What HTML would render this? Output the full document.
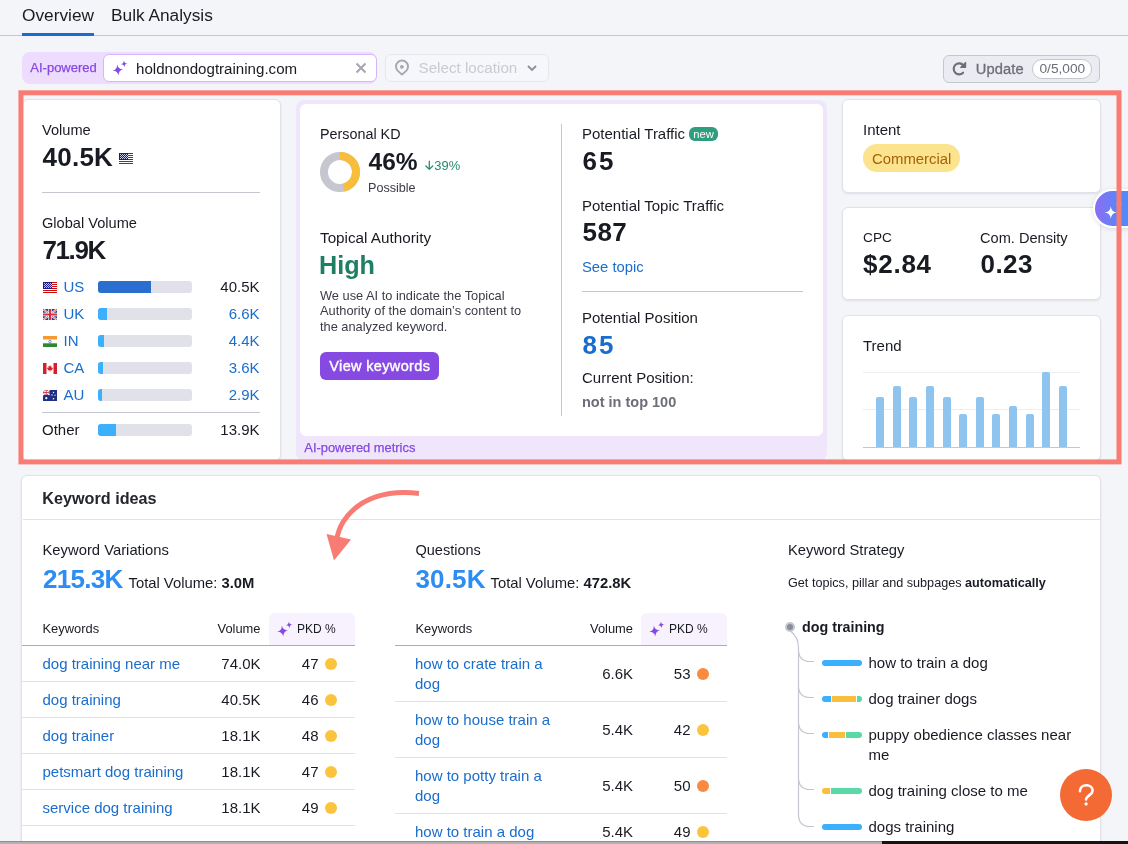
<!DOCTYPE html>
<html><head><meta charset="utf-8">
<style>
*{box-sizing:border-box;margin:0;padding:0}
html,body{width:1128px;height:844px;overflow:hidden;background:#f4f5f9;font-family:"Liberation Sans",sans-serif}
#root{position:absolute;left:0;top:0;width:1128px;height:844px;will-change:transform;font-family:"Liberation Sans",sans-serif;color:#191b23}
.a{position:absolute;white-space:nowrap}
svg.a{overflow:visible}
.card{position:absolute;background:#fff;border:1px solid #e0e1e9;border-radius:6px;box-shadow:0 1px 2px rgba(25,27,35,.10)}
</style></head>
<body><div id="root">
<div class="a" style="left:22px;top:5.01px;font-size:17.3px;line-height:20px;color:#191b23;">Overview</div>
<div class="a" style="left:111px;top:5.01px;font-size:17.3px;line-height:20px;color:#191b23;">Bulk Analysis</div>
<div class="a" style="left:0px;top:35px;width:1128px;height:1px;background:#c4c7cf;"></div>
<div class="a" style="left:22px;top:33px;width:72px;height:3px;background:#1a6dcc;"></div>
<div class="a" style="left:22px;top:52px;width:355px;height:32px;background:#eedcfe;border-radius:8px;"></div>
<div class="a" style="left:30.3px;top:60.00px;font-size:13.0px;line-height:16px;color:#8649e1;-webkit-text-stroke:0.25px #8649e1;">AI-powered</div>
<div class="a" style="left:103px;top:54px;width:274px;height:28px;background:#fff;border:1px solid #d5b6fb;border-radius:6px;"></div>
<svg class="a" style="left:0;top:0" width="1128" height="844"><g fill="#8649e1"><path transform="rotate(-8 117.9 70)" d="M117.90 64.50 Q118.34 69.56 123.40 70.00 Q118.34 70.44 117.90 75.50 Q117.46 70.44 112.40 70.00 Q117.46 69.56 117.90 64.50Z"/><path transform="rotate(-8 124.2 63.8)" d="M124.20 60.40 Q124.47 63.53 127.60 63.80 Q124.47 64.07 124.20 67.20 Q123.93 64.07 120.80 63.80 Q123.93 63.53 124.20 60.40Z"/></g></svg>
<div class="a" style="left:136px;top:59.67px;font-size:15.1px;line-height:18px;color:#191b23;">holdnondogtraining.com</div>
<svg class="a" style="left:355px;top:62px" width="12" height="12" viewBox="0 0 12 12"><path d="M1.5 1.5L10.5 10.5M10.5 1.5L1.5 10.5" stroke="#a3a6b1" stroke-width="2"/></svg>
<div class="a" style="left:385px;top:54px;width:164px;height:28px;background:#f6f7fa;border:1px solid #e6e7ed;border-radius:6px;"></div>
<svg class="a" style="left:0;top:0" width="1128" height="844"><path d="M402 74.6L397.6 70.6A6 6 0 1 1 406.4 70.6Z" fill="none" stroke="#a6a7ae" stroke-width="1.9" stroke-linejoin="round"/><circle cx="401.9" cy="66.8" r="1.9" fill="#a6a7ae"/></svg>
<div class="a" style="left:418.5px;top:60.13px;font-size:15.2px;line-height:16px;color:#c9cbd3;">Select location</div>
<svg class="a" style="left:526px;top:64px" width="12" height="8" viewBox="0 0 12 8"><path d="M2 2L6 6L10 2" fill="none" stroke="#898d9a" stroke-width="1.8"/></svg>
<div class="a" style="left:943px;top:55px;width:157px;height:28px;background:#ebecf1;border:1px solid #c4c7cf;border-radius:6px;"></div>
<svg class="a" style="left:0;top:0" width="1128" height="844"><path d="M963.1 72.7A5.5 5.5 0 1 1 963.3 65.2" fill="none" stroke="#6c6e79" stroke-width="2.1" stroke-linecap="round"/><path d="M960.7 67.3H965.6V62.4Z" fill="#6c6e79" stroke="#6c6e79" stroke-width="1.2" stroke-linejoin="round"/></svg>
<div class="a" style="left:975.8px;top:60.71px;font-size:14.7px;line-height:16px;color:#6c6e79;letter-spacing:0.1px;-webkit-text-stroke:0.3px #6c6e79;">Update</div>
<div class="a" style="left:1032px;top:59px;width:60px;height:20px;background:#fff;border:1px solid #c4c7cf;border-radius:10px;"></div>
<div class="a" style="left:1039.5px;top:61.25px;font-size:13.7px;line-height:16px;color:#6c6e79;">0/5,000</div>
<div class="card" style="left:22px;top:99px;width:259px;height:362px"></div>
<div class="a" style="left:42px;top:120.84px;font-size:14.6px;line-height:18px;color:#191b23;">Volume</div>
<div class="a" style="left:42.5px;top:141.99px;font-size:26px;line-height:30px;color:#191b23;font-weight:bold;letter-spacing:0.25px;">40.5K</div>
<svg class="a" style="left:119px;top:153px" width="14" height="11" viewBox="0 0 14 11" shape-rendering="crispEdges"><rect width="14" height="11" fill="#fff"/><rect y="0" width="14" height="1" fill="#cc0a0a"/><rect y="2" width="14" height="1" fill="#cc0a0a"/><rect y="4" width="14" height="1" fill="#cc0a0a"/><rect y="6" width="14" height="1" fill="#cc0a0a"/><rect y="8" width="14" height="1" fill="#cc0a0a"/><rect y="10" width="14" height="1" fill="#cc0a0a"/><rect width="9" height="7" fill="#1a1a8c"/><rect x="1" y="1" width="1" height="1" fill="#c8c8e8"/><rect x="3" y="1" width="1" height="1" fill="#c8c8e8"/><rect x="5" y="1" width="1" height="1" fill="#c8c8e8"/><rect x="7" y="1" width="1" height="1" fill="#c8c8e8"/><rect x="2" y="2" width="1" height="1" fill="#c8c8e8"/><rect x="4" y="2" width="1" height="1" fill="#c8c8e8"/><rect x="6" y="2" width="1" height="1" fill="#c8c8e8"/><rect x="8" y="2" width="1" height="1" fill="#c8c8e8"/><rect x="1" y="3" width="1" height="1" fill="#c8c8e8"/><rect x="3" y="3" width="1" height="1" fill="#c8c8e8"/><rect x="5" y="3" width="1" height="1" fill="#c8c8e8"/><rect x="7" y="3" width="1" height="1" fill="#c8c8e8"/><rect x="2" y="4" width="1" height="1" fill="#c8c8e8"/><rect x="4" y="4" width="1" height="1" fill="#c8c8e8"/><rect x="6" y="4" width="1" height="1" fill="#c8c8e8"/><rect x="8" y="4" width="1" height="1" fill="#c8c8e8"/><rect x="1" y="5" width="1" height="1" fill="#c8c8e8"/><rect x="3" y="5" width="1" height="1" fill="#c8c8e8"/><rect x="5" y="5" width="1" height="1" fill="#c8c8e8"/><rect x="7" y="5" width="1" height="1" fill="#c8c8e8"/></svg>
<div class="a" style="left:42px;top:192px;width:218px;height:1px;background:#c4c7cf;"></div>
<div class="a" style="left:42px;top:213.84px;font-size:14.6px;line-height:18px;color:#191b23;">Global Volume</div>
<div class="a" style="left:42.5px;top:234.99px;font-size:26px;line-height:30px;color:#191b23;font-weight:bold;letter-spacing:-1.4px;">71.9K</div>
<svg class="a" style="left:43px;top:282px" width="14" height="11" viewBox="0 0 14 11" shape-rendering="crispEdges"><rect width="14" height="11" fill="#fff"/><rect y="0" width="14" height="1" fill="#cc0a0a"/><rect y="2" width="14" height="1" fill="#cc0a0a"/><rect y="4" width="14" height="1" fill="#cc0a0a"/><rect y="6" width="14" height="1" fill="#cc0a0a"/><rect y="8" width="14" height="1" fill="#cc0a0a"/><rect y="10" width="14" height="1" fill="#cc0a0a"/><rect width="9" height="7" fill="#1a1a8c"/><rect x="1" y="1" width="1" height="1" fill="#c8c8e8"/><rect x="3" y="1" width="1" height="1" fill="#c8c8e8"/><rect x="5" y="1" width="1" height="1" fill="#c8c8e8"/><rect x="7" y="1" width="1" height="1" fill="#c8c8e8"/><rect x="2" y="2" width="1" height="1" fill="#c8c8e8"/><rect x="4" y="2" width="1" height="1" fill="#c8c8e8"/><rect x="6" y="2" width="1" height="1" fill="#c8c8e8"/><rect x="8" y="2" width="1" height="1" fill="#c8c8e8"/><rect x="1" y="3" width="1" height="1" fill="#c8c8e8"/><rect x="3" y="3" width="1" height="1" fill="#c8c8e8"/><rect x="5" y="3" width="1" height="1" fill="#c8c8e8"/><rect x="7" y="3" width="1" height="1" fill="#c8c8e8"/><rect x="2" y="4" width="1" height="1" fill="#c8c8e8"/><rect x="4" y="4" width="1" height="1" fill="#c8c8e8"/><rect x="6" y="4" width="1" height="1" fill="#c8c8e8"/><rect x="8" y="4" width="1" height="1" fill="#c8c8e8"/><rect x="1" y="5" width="1" height="1" fill="#c8c8e8"/><rect x="3" y="5" width="1" height="1" fill="#c8c8e8"/><rect x="5" y="5" width="1" height="1" fill="#c8c8e8"/><rect x="7" y="5" width="1" height="1" fill="#c8c8e8"/></svg>
<div class="a" style="left:63.5px;top:278.70px;font-size:15px;line-height:16px;color:#1a6dcc;">US</div>
<div class="a" style="left:98px;top:281px;width:94px;height:12px;background:#e0e1e9;border-radius:3px;overflow:hidden;"><div style="width:53px;height:12px;background:#2a6fcf"></div></div>
<div class="a" style="left:179.5px;width:80px;text-align:right;top:278.70px;font-size:15px;line-height:16px;color:#191b23;">40.5K</div>
<svg class="a" style="left:43px;top:309px" width="14" height="11" viewBox="0 0 14 11"><rect width="14" height="11" fill="#2b3b8f"/><path d="M0 0L14 11M14 0L0 11" stroke="#fff" stroke-width="2.2"/><path d="M0 0L14 11M14 0L0 11" stroke="#d22f3a" stroke-width="0.8"/><path d="M7 0V11M0 5.5H14" stroke="#fff" stroke-width="3.4"/><path d="M7 0V11M0 5.5H14" stroke="#d22f3a" stroke-width="2"/></svg>
<div class="a" style="left:63.5px;top:305.70px;font-size:15px;line-height:16px;color:#1a6dcc;">UK</div>
<div class="a" style="left:98px;top:308px;width:94px;height:12px;background:#e0e1e9;border-radius:3px;overflow:hidden;"><div style="width:9px;height:12px;background:#3ab0ff"></div></div>
<div class="a" style="left:179.5px;width:80px;text-align:right;top:305.70px;font-size:15px;line-height:16px;color:#1a6dcc;">6.6K</div>
<svg class="a" style="left:43px;top:336px" width="14" height="11" viewBox="0 0 14 11"><rect width="14" height="3.7" fill="#f59a2d"/><rect y="3.7" width="14" height="3.6" fill="#fff"/><rect y="7.3" width="14" height="3.7" fill="#2c8a2c"/><circle cx="7" cy="5.5" r="1.3" fill="none" stroke="#3a4a9a" stroke-width="0.6"/></svg>
<div class="a" style="left:63.5px;top:332.70px;font-size:15px;line-height:16px;color:#1a6dcc;">IN</div>
<div class="a" style="left:98px;top:335px;width:94px;height:12px;background:#e0e1e9;border-radius:3px;overflow:hidden;"><div style="width:6px;height:12px;background:#3ab0ff"></div></div>
<div class="a" style="left:179.5px;width:80px;text-align:right;top:332.70px;font-size:15px;line-height:16px;color:#1a6dcc;">4.4K</div>
<svg class="a" style="left:43px;top:363px" width="14" height="11" viewBox="0 0 14 11"><rect width="14" height="11" fill="#fff"/><rect width="3.5" height="11" fill="#d8202c"/><rect x="10.5" width="3.5" height="11" fill="#d8202c"/><path d="M7 2.2L7.8 3.6 8.8 3.3 8.4 5.3 9.6 4.6 9.9 5.4 9 6.4 9.2 7.2H7.3V8.8H6.7V7.2H4.8L5 6.4 4.1 5.4 4.4 4.6 5.6 5.3 5.2 3.3 6.2 3.6Z" fill="#d8202c"/></svg>
<div class="a" style="left:63.5px;top:359.70px;font-size:15px;line-height:16px;color:#1a6dcc;">CA</div>
<div class="a" style="left:98px;top:362px;width:94px;height:12px;background:#e0e1e9;border-radius:3px;overflow:hidden;"><div style="width:5px;height:12px;background:#3ab0ff"></div></div>
<div class="a" style="left:179.5px;width:80px;text-align:right;top:359.70px;font-size:15px;line-height:16px;color:#1a6dcc;">3.6K</div>
<svg class="a" style="left:43px;top:390px" width="14" height="11" viewBox="0 0 14 11"><rect width="14" height="11" fill="#1f2f86"/><path d="M0 0L6.5 5M6.5 0L0 5" stroke="#fff" stroke-width="1.2"/><path d="M3.25 0V5M0 2.5H6.5" stroke="#fff" stroke-width="1.8"/><path d="M3.25 0V5M0 2.5H6.5" stroke="#d22f3a" stroke-width="0.9"/><circle cx="3.3" cy="8.2" r="1.1" fill="#fff"/><circle cx="10.5" cy="2.5" r="0.7" fill="#fff"/><circle cx="9" cy="5" r="0.7" fill="#fff"/><circle cx="12" cy="5.2" r="0.6" fill="#fff"/><circle cx="10.5" cy="8.8" r="0.8" fill="#fff"/></svg>
<div class="a" style="left:63.5px;top:386.70px;font-size:15px;line-height:16px;color:#1a6dcc;">AU</div>
<div class="a" style="left:98px;top:389px;width:94px;height:12px;background:#e0e1e9;border-radius:3px;overflow:hidden;"><div style="width:4px;height:12px;background:#3ab0ff"></div></div>
<div class="a" style="left:179.5px;width:80px;text-align:right;top:386.70px;font-size:15px;line-height:16px;color:#1a6dcc;">2.9K</div>
<div class="a" style="left:42px;top:412px;width:218px;height:1px;background:#c4c7cf;"></div>
<div class="a" style="left:42px;top:421.70px;font-size:15px;line-height:16px;color:#191b23;">Other</div>
<div class="a" style="left:98px;top:424px;width:94px;height:12px;background:#e0e1e9;border-radius:3px;overflow:hidden;"><div style="width:18px;height:12px;background:#3ab0ff"></div></div>
<div class="a" style="left:179.5px;width:80px;text-align:right;top:421.70px;font-size:15px;line-height:16px;color:#191b23;">13.9K</div>
<div class="a" style="left:296px;top:100px;width:531px;height:361px;background:#efe6fb;border-radius:8px;"></div>
<div class="a" style="left:300px;top:104px;width:523px;height:332px;background:#fff;border-radius:6px;"></div>
<div class="a" style="left:304.3px;top:440.63px;font-size:12.9px;line-height:14px;color:#8649e1;-webkit-text-stroke:0.25px #8649e1;">AI-powered metrics</div>
<div class="a" style="left:320px;top:126.33px;font-size:14.35px;line-height:17px;color:#191b23;">Personal KD</div>
<svg class="a" style="left:320px;top:152px" width="40" height="40" viewBox="0 0 40 40"><circle cx="20" cy="20" r="16" fill="none" stroke="#c4c7cf" stroke-width="8"/><circle cx="20" cy="20" r="16" fill="none" stroke="#f8bd3b" stroke-width="8" stroke-dasharray="46.24 100.53" transform="rotate(-90 20 20)"/></svg>
<div class="a" style="left:368.5px;top:147.11px;font-size:24.5px;line-height:30px;color:#191b23;font-weight:bold;">46%</div>
<svg class="a" style="left:0;top:0" width="1128" height="844"><path d="M429.3 161.2V169.3M425.9 166L429.3 169.4 432.7 166" fill="none" stroke="#248a6f" stroke-width="1.25" stroke-linecap="round" stroke-linejoin="round"/></svg>
<div class="a" style="left:434.3px;top:157.73px;font-size:12.9px;line-height:16px;color:#248a6f;letter-spacing:0.05px;">39%</div>
<div class="a" style="left:368px;top:180.03px;font-size:12.6px;line-height:16px;color:#3a3c45;">Possible</div>
<div class="a" style="left:320px;top:228.62px;font-size:15.25px;line-height:18px;color:#191b23;">Topical Authority</div>
<div class="a" style="left:319px;top:250.07px;font-size:25.2px;line-height:30px;color:#1e7f64;font-weight:bold;">High</div>
<div class="a" style="left:320px;top:287.66px;font-size:12.8px;line-height:16px;color:#3a3c45;">We use AI to indicate the Topical</div>
<div class="a" style="left:320px;top:303.46px;font-size:12.8px;line-height:16px;color:#3a3c45;letter-spacing:0.02px;">Authority of the domain&#8217;s content to</div>
<div class="a" style="left:320px;top:319.26px;font-size:12.8px;line-height:16px;color:#3a3c45;">the analyzed keyword.</div>
<div class="a" style="left:320px;top:352px;width:119px;height:28px;background:#8649e1;border-radius:6px;"></div>
<div class="a" style="left:329.3px;top:357.58px;font-size:14.5px;line-height:16px;color:#fff;letter-spacing:0.35px;-webkit-text-stroke:0.4px #fff;">View keywords</div>
<div class="a" style="left:561px;top:124px;width:1px;height:292px;background:#c4c7cf;"></div>
<div class="a" style="left:582px;top:124.80px;font-size:15px;line-height:18px;color:#191b23;">Potential Traffic</div>
<div class="a" style="left:689px;top:127px;width:29px;height:14px;background:#2f9e7e;border-radius:6px;"></div>
<div class="a" style="left:689px;top:126.52px;font-size:11.2px;line-height:14px;color:#fff;width:29px;text-align:center;">new</div>
<div class="a" style="left:582.5px;top:145.69px;font-size:26px;line-height:30px;color:#191b23;font-weight:bold;letter-spacing:2px;">65</div>
<div class="a" style="left:582px;top:196.80px;font-size:15px;line-height:18px;color:#191b23;">Potential Topic Traffic</div>
<div class="a" style="left:582.5px;top:217.29px;font-size:26px;line-height:30px;color:#191b23;font-weight:bold;letter-spacing:0.45px;">587</div>
<div class="a" style="left:582px;top:258.57px;font-size:14.8px;line-height:16px;color:#1a6dcc;">See topic</div>
<div class="a" style="left:582px;top:291px;width:221px;height:1px;background:#c4c7cf;"></div>
<div class="a" style="left:582px;top:308.90px;font-size:15px;line-height:18px;color:#191b23;">Potential Position</div>
<div class="a" style="left:582.5px;top:329.79px;font-size:26px;line-height:30px;color:#1a6dcc;font-weight:bold;letter-spacing:2px;">85</div>
<div class="a" style="left:582px;top:369.00px;font-size:15px;line-height:18px;color:#191b23;">Current Position:</div>
<div class="a" style="left:582px;top:393.88px;font-size:14.5px;line-height:16px;color:#6c6e79;font-weight:bold;">not in top 100</div>
<div class="card" style="left:842px;top:99px;width:259px;height:94px"></div>
<div class="a" style="left:863px;top:121.00px;font-size:15px;line-height:18px;color:#191b23;">Intent</div>
<div class="a" style="left:863px;top:144px;width:97px;height:28px;background:#fce38d;border-radius:14px;"></div>
<div class="a" style="left:872px;top:150.74px;font-size:14.9px;line-height:16px;color:#a9610a;">Commercial</div>
<div class="card" style="left:842px;top:207px;width:259px;height:93px"></div>
<div class="a" style="left:863px;top:230.25px;font-size:13.7px;line-height:16px;color:#191b23;">CPC</div>
<div class="a" style="left:980px;top:228.94px;font-size:14.6px;line-height:18px;color:#191b23;">Com. Density</div>
<div class="a" style="left:863px;top:249.49px;font-size:26px;line-height:30px;color:#191b23;font-weight:bold;letter-spacing:0.75px;">$2.84</div>
<div class="a" style="left:980.5px;top:249.49px;font-size:26px;line-height:30px;color:#191b23;font-weight:bold;letter-spacing:0.47px;">0.23</div>
<div class="card" style="left:842px;top:315px;width:259px;height:146px"></div>
<div class="a" style="left:863px;top:336.80px;font-size:15px;line-height:18px;color:#191b23;">Trend</div>
<div class="a" style="left:863px;top:372px;width:217px;height:1px;background:#edeef3;"></div>
<div class="a" style="left:863px;top:409px;width:217px;height:1px;background:#edeef3;"></div>
<div class="a" style="left:863px;top:447px;width:217px;height:1px;background:#c4c7cf;"></div>
<div class="a" style="left:875.9px;top:397px;width:8px;height:50px;background:#8ec4ee;border-radius:2px 2px 0 0;"></div>
<div class="a" style="left:892.5px;top:386px;width:8px;height:61px;background:#8ec4ee;border-radius:2px 2px 0 0;"></div>
<div class="a" style="left:909.2px;top:397px;width:8px;height:50px;background:#8ec4ee;border-radius:2px 2px 0 0;"></div>
<div class="a" style="left:925.8px;top:386px;width:8px;height:61px;background:#8ec4ee;border-radius:2px 2px 0 0;"></div>
<div class="a" style="left:942.5px;top:397px;width:8px;height:50px;background:#8ec4ee;border-radius:2px 2px 0 0;"></div>
<div class="a" style="left:959.1px;top:414px;width:8px;height:33px;background:#8ec4ee;border-radius:2px 2px 0 0;"></div>
<div class="a" style="left:975.7px;top:397px;width:8px;height:50px;background:#8ec4ee;border-radius:2px 2px 0 0;"></div>
<div class="a" style="left:992.4px;top:414px;width:8px;height:33px;background:#8ec4ee;border-radius:2px 2px 0 0;"></div>
<div class="a" style="left:1009.0px;top:406px;width:8px;height:41px;background:#8ec4ee;border-radius:2px 2px 0 0;"></div>
<div class="a" style="left:1025.7px;top:414px;width:8px;height:33px;background:#8ec4ee;border-radius:2px 2px 0 0;"></div>
<div class="a" style="left:1042.3px;top:372px;width:8px;height:75px;background:#8ec4ee;border-radius:2px 2px 0 0;"></div>
<div class="a" style="left:1058.9px;top:386px;width:8px;height:61px;background:#8ec4ee;border-radius:2px 2px 0 0;"></div>
<div class="a" style="left:1093px;top:189px;width:60px;height:39px;border-radius:19.5px 0 0 19.5px;background:linear-gradient(90deg,#8d6df6 0px,#5a86f6 24px,#4a8ef7 36px);border:2.5px solid #fff;box-shadow:0 1px 5px rgba(0,0,0,.12)"></div>
<svg class="a" style="left:0;top:0" width="1128" height="844"><g fill="#fff"><path transform="rotate(0 1110.8 212.5)" d="M1110.80 206.20 Q1111.30 212.00 1117.10 212.50 Q1111.30 213.00 1110.80 218.80 Q1110.30 213.00 1104.50 212.50 Q1110.30 212.00 1110.80 206.20Z"/><path transform="rotate(0 1119 203.8)" d="M1119.00 200.50 Q1119.26 203.54 1122.30 203.80 Q1119.26 204.06 1119.00 207.10 Q1118.74 204.06 1115.70 203.80 Q1118.74 203.54 1119.00 200.50Z"/></g></svg>
<svg class="a" style="left:0;top:0" width="1128" height="844"><rect x="20.95" y="92.8" width="1098.05" height="369.1" fill="none" stroke="#f87c74" stroke-width="5"/></svg>
<div class="card" style="left:21px;top:475px;width:1080px;height:420px"></div>
<div class="a" style="left:23px;top:519px;width:1077px;height:1px;background:#e0e1e9;"></div>
<div class="a" style="left:42.3px;top:487.79px;font-size:16.2px;line-height:20px;color:#24262e;font-weight:bold;">Keyword ideas</div>
<div class="a" style="left:42.5px;top:540.97px;font-size:14.8px;line-height:18px;color:#191b23;">Keyword Variations</div>
<div class="a" style="left:43px;top:564.09px;font-size:26px;line-height:30px;color:#2d8df2;font-weight:bold;letter-spacing:-0.7px;">215.3K</div>
<div class="a" style="left:128.5px;top:575.27px;font-size:14.8px;line-height:16px;color:#191b23;">Total Volume: <b>3.0M</b></div>
<div class="a" style="left:269px;top:613px;width:86px;height:32px;background:#f8f2fe;border-radius:6px 6px 0 0;"></div>
<div class="a" style="left:42.5px;top:620.53px;font-size:12.9px;line-height:16px;color:#191b23;">Keywords</div>
<div class="a" style="left:180.5px;width:80px;text-align:right;top:620.53px;font-size:12.9px;line-height:16px;color:#191b23;">Volume</div>
<svg class="a" style="left:0;top:0" width="1128" height="844"><g fill="#8649e1"><path transform="rotate(-8 282.6 631)" d="M282.60 625.40 Q283.05 630.55 288.20 631.00 Q283.05 631.45 282.60 636.60 Q282.15 631.45 277.00 631.00 Q282.15 630.55 282.60 625.40Z"/><path transform="rotate(-8 289.2 624.8)" d="M289.20 621.40 Q289.47 624.53 292.60 624.80 Q289.47 625.07 289.20 628.20 Q288.93 625.07 285.80 624.80 Q288.93 624.53 289.20 621.40Z"/></g></svg>
<div class="a" style="left:297px;top:620.84px;font-size:12.0px;line-height:16px;color:#191b23;">PKD %</div>
<div class="a" style="left:22px;top:645px;width:333px;height:1px;background:#a9abb6;"></div>
<div class="a" style="left:42.5px;top:656.00px;font-size:15px;line-height:16px;color:#1a6dcc;">dog training near me</div>
<div class="a" style="left:180.5px;width:80px;text-align:right;top:656.00px;font-size:15px;line-height:16px;color:#191b23;">74.0K</div>
<div class="a" style="left:278.5px;width:40px;text-align:right;top:656.00px;font-size:15px;line-height:16px;color:#191b23;">47</div>
<div class="a" style="left:325px;top:657.7px;width:12px;height:12px;border-radius:6px;background:#fbc43c"></div>
<div class="a" style="left:22px;top:681px;width:333px;height:1px;background:#e0e1e9;"></div>
<div class="a" style="left:42.5px;top:692.00px;font-size:15px;line-height:16px;color:#1a6dcc;">dog training</div>
<div class="a" style="left:180.5px;width:80px;text-align:right;top:692.00px;font-size:15px;line-height:16px;color:#191b23;">40.5K</div>
<div class="a" style="left:278.5px;width:40px;text-align:right;top:692.00px;font-size:15px;line-height:16px;color:#191b23;">46</div>
<div class="a" style="left:325px;top:693.7px;width:12px;height:12px;border-radius:6px;background:#fbc43c"></div>
<div class="a" style="left:22px;top:717px;width:333px;height:1px;background:#e0e1e9;"></div>
<div class="a" style="left:42.5px;top:728.00px;font-size:15px;line-height:16px;color:#1a6dcc;">dog trainer</div>
<div class="a" style="left:180.5px;width:80px;text-align:right;top:728.00px;font-size:15px;line-height:16px;color:#191b23;">18.1K</div>
<div class="a" style="left:278.5px;width:40px;text-align:right;top:728.00px;font-size:15px;line-height:16px;color:#191b23;">48</div>
<div class="a" style="left:325px;top:729.7px;width:12px;height:12px;border-radius:6px;background:#fbc43c"></div>
<div class="a" style="left:22px;top:753px;width:333px;height:1px;background:#e0e1e9;"></div>
<div class="a" style="left:42.5px;top:764.00px;font-size:15px;line-height:16px;color:#1a6dcc;">petsmart dog training</div>
<div class="a" style="left:180.5px;width:80px;text-align:right;top:764.00px;font-size:15px;line-height:16px;color:#191b23;">18.1K</div>
<div class="a" style="left:278.5px;width:40px;text-align:right;top:764.00px;font-size:15px;line-height:16px;color:#191b23;">47</div>
<div class="a" style="left:325px;top:765.7px;width:12px;height:12px;border-radius:6px;background:#fbc43c"></div>
<div class="a" style="left:22px;top:789px;width:333px;height:1px;background:#e0e1e9;"></div>
<div class="a" style="left:42.5px;top:800.00px;font-size:15px;line-height:16px;color:#1a6dcc;">service dog training</div>
<div class="a" style="left:180.5px;width:80px;text-align:right;top:800.00px;font-size:15px;line-height:16px;color:#191b23;">18.1K</div>
<div class="a" style="left:278.5px;width:40px;text-align:right;top:800.00px;font-size:15px;line-height:16px;color:#191b23;">49</div>
<div class="a" style="left:325px;top:801.7px;width:12px;height:12px;border-radius:6px;background:#fbc43c"></div>
<div class="a" style="left:22px;top:825px;width:333px;height:1px;background:#e0e1e9;"></div>
<div class="a" style="left:415.5px;top:541.58px;font-size:14.5px;line-height:17px;color:#191b23;">Questions</div>
<div class="a" style="left:415.5px;top:564.09px;font-size:26px;line-height:30px;color:#2d8df2;font-weight:bold;letter-spacing:0.15px;">30.5K</div>
<div class="a" style="left:490.5px;top:575.27px;font-size:14.8px;line-height:16px;color:#191b23;">Total Volume: <b>472.8K</b></div>
<div class="a" style="left:641px;top:613px;width:86px;height:32px;background:#f8f2fe;border-radius:6px 6px 0 0;"></div>
<div class="a" style="left:415.5px;top:620.53px;font-size:12.9px;line-height:16px;color:#191b23;">Keywords</div>
<div class="a" style="left:553px;width:80px;text-align:right;top:620.53px;font-size:12.9px;line-height:16px;color:#191b23;">Volume</div>
<svg class="a" style="left:0;top:0" width="1128" height="844"><g fill="#8649e1"><path transform="rotate(-8 654.6 631)" d="M654.60 625.40 Q655.05 630.55 660.20 631.00 Q655.05 631.45 654.60 636.60 Q654.15 631.45 649.00 631.00 Q654.15 630.55 654.60 625.40Z"/><path transform="rotate(-8 661.2 624.8)" d="M661.20 621.40 Q661.47 624.53 664.60 624.80 Q661.47 625.07 661.20 628.20 Q660.93 625.07 657.80 624.80 Q660.93 624.53 661.20 621.40Z"/></g></svg>
<div class="a" style="left:669px;top:620.84px;font-size:12.0px;line-height:16px;color:#191b23;">PKD %</div>
<div class="a" style="left:395px;top:645px;width:332px;height:1px;background:#a9abb6;"></div>
<div class="a" style="left:415px;top:656.40px;font-size:15px;line-height:16px;color:#1a6dcc;">how to crate train a</div>
<div class="a" style="left:415px;top:676.20px;font-size:15px;line-height:16px;color:#1a6dcc;">dog</div>
<div class="a" style="left:553px;width:80px;text-align:right;top:666.10px;font-size:15px;line-height:16px;color:#191b23;">6.6K</div>
<div class="a" style="left:650.5px;width:40px;text-align:right;top:666.10px;font-size:15px;line-height:16px;color:#191b23;">53</div>
<div class="a" style="left:697px;top:668.1px;width:12px;height:12px;border-radius:6px;background:#fa8a3f"></div>
<div class="a" style="left:395px;top:701px;width:332px;height:1px;background:#e0e1e9;"></div>
<div class="a" style="left:415px;top:712.40px;font-size:15px;line-height:16px;color:#1a6dcc;">how to house train a</div>
<div class="a" style="left:415px;top:732.20px;font-size:15px;line-height:16px;color:#1a6dcc;">dog</div>
<div class="a" style="left:553px;width:80px;text-align:right;top:722.10px;font-size:15px;line-height:16px;color:#191b23;">5.4K</div>
<div class="a" style="left:650.5px;width:40px;text-align:right;top:722.10px;font-size:15px;line-height:16px;color:#191b23;">42</div>
<div class="a" style="left:697px;top:724.1px;width:12px;height:12px;border-radius:6px;background:#fbc43c"></div>
<div class="a" style="left:395px;top:757px;width:332px;height:1px;background:#e0e1e9;"></div>
<div class="a" style="left:415px;top:768.40px;font-size:15px;line-height:16px;color:#1a6dcc;">how to potty train a</div>
<div class="a" style="left:415px;top:788.20px;font-size:15px;line-height:16px;color:#1a6dcc;">dog</div>
<div class="a" style="left:553px;width:80px;text-align:right;top:778.10px;font-size:15px;line-height:16px;color:#191b23;">5.4K</div>
<div class="a" style="left:650.5px;width:40px;text-align:right;top:778.10px;font-size:15px;line-height:16px;color:#191b23;">50</div>
<div class="a" style="left:697px;top:780.1px;width:12px;height:12px;border-radius:6px;background:#fa8a3f"></div>
<div class="a" style="left:395px;top:813px;width:332px;height:1px;background:#e0e1e9;"></div>
<div class="a" style="left:415px;top:823.80px;font-size:15px;line-height:16px;color:#1a6dcc;">how to train a dog</div>
<div class="a" style="left:553px;width:80px;text-align:right;top:824.40px;font-size:15px;line-height:16px;color:#191b23;">5.4K</div>
<div class="a" style="left:650.5px;width:40px;text-align:right;top:824.40px;font-size:15px;line-height:16px;color:#191b23;">49</div>
<div class="a" style="left:697px;top:826.4px;width:12px;height:12px;border-radius:6px;background:#fbc43c"></div>
<div class="a" style="left:788px;top:540.79px;font-size:14.75px;line-height:18px;color:#191b23;">Keyword Strategy</div>
<div class="a" style="left:788px;top:574.72px;font-size:12.65px;line-height:16px;color:#191b23;">Get topics, pillar and subpages <b>automatically</b></div>
<div class="a" style="left:785px;top:622px;width:10px;height:10px;border-radius:5px;background:#c4c7cf"></div>
<div class="a" style="left:787px;top:624px;width:6px;height:6px;border-radius:3px;background:#898d9a"></div>
<div class="a" style="left:802px;top:618.85px;font-size:14.3px;line-height:16px;color:#191b23;font-weight:bold;">dog training</div>
<svg class="a" style="left:0;top:0" width="1128" height="844"><path d="M790.5 631 C796 636 798.5 640 798.5 648 L798.5 814.5 M798.5 649.5 C798.5 657.5 803 661.5 810 661.5 L814 661.5 M798.5 685.5 C798.5 693.5 803 697.5 810 697.5 L814 697.5 M798.5 721.5 C798.5 729.5 803 733.5 810 733.5 L814 733.5 M798.5 777.5 C798.5 785.5 803 789.5 810 789.5 L814 789.5 M798.5 814.5 C798.5 822.5 803 826.5 810 826.5 L814 826.5" fill="none" stroke="#c4c7cf" stroke-width="1.2"/></svg>
<div class="a" style="left:822px;top:660.0px;width:40px;height:6px;background:#3ab0ff;border-radius:3px;"></div>
<div class="a" style="left:868.5px;top:655.30px;font-size:15px;line-height:16px;color:#191b23;">how to train a dog</div>
<div class="a" style="left:822px;top:696.0px;width:9px;height:6px;background:#3ab0ff;border-radius:3px 0 0 3px;"></div>
<div class="a" style="left:832px;top:696.0px;width:24px;height:6px;background:#f9be3b;border-radius:0;"></div>
<div class="a" style="left:857px;top:696.0px;width:5px;height:6px;background:#58d9a6;border-radius:0 3px 3px 0;"></div>
<div class="a" style="left:868.5px;top:691.30px;font-size:15px;line-height:16px;color:#191b23;">dog trainer dogs</div>
<div class="a" style="left:822px;top:732.0px;width:6px;height:6px;background:#3ab0ff;border-radius:3px 0 0 3px;"></div>
<div class="a" style="left:829px;top:732.0px;width:16px;height:6px;background:#f9be3b;border-radius:0;"></div>
<div class="a" style="left:846px;top:732.0px;width:16px;height:6px;background:#58d9a6;border-radius:0 3px 3px 0;"></div>
<div class="a" style="left:868.5px;top:727.30px;font-size:15px;line-height:16px;color:#191b23;">puppy obedience classes near</div>
<div class="a" style="left:868.5px;top:747.30px;font-size:15px;line-height:16px;color:#191b23;">me</div>
<div class="a" style="left:822px;top:788.0px;width:8px;height:6px;background:#f9be3b;border-radius:3px 0 0 3px;"></div>
<div class="a" style="left:831px;top:788.0px;width:31px;height:6px;background:#58d9a6;border-radius:0 3px 3px 0;"></div>
<div class="a" style="left:868.5px;top:783.30px;font-size:15px;line-height:16px;color:#191b23;">dog training close to me</div>
<div class="a" style="left:822px;top:824.0px;width:40px;height:6px;background:#3ab0ff;border-radius:3px;"></div>
<div class="a" style="left:868.5px;top:819.30px;font-size:15px;line-height:16px;color:#191b23;">dogs training</div>
<svg class="a" style="left:0;top:0" width="1128" height="844"><path d="M419 493.5 C390 490 360 496 343 522 C340 527 338 532 336.5 540" fill="none" stroke="#f87c74" stroke-width="5"/><path d="M326.5 534 L351 539.5 L334 560.5Z" fill="#f87c74"/></svg>
<div class="a" style="left:1060px;top:769px;width:52px;height:52px;border-radius:26px;background:#f46a35"></div>
<svg class="a" style="left:0;top:0" width="1128" height="844"><path d="M1079.9 791.3C1079.9 787.6 1082.7 785.2 1086.3 785.2C1089.9 785.2 1092.6 787.6 1092.6 790.7C1092.6 794.6 1087.4 795.2 1086.1 798.9V799.4" fill="none" stroke="#fff" stroke-width="2.6" stroke-linecap="round"/><circle cx="1086.1" cy="803.9" r="1.6" fill="#fff"/></svg>
<div class="a" style="left:0px;top:841px;width:882px;height:3px;background:#b2b2b2;"></div>
<div class="a" style="left:0px;top:841px;width:882px;height:1px;background:#8e8e8e;"></div>
<div class="a" style="left:882px;top:841px;width:246px;height:3px;background:#17130f;"></div>
</div></body></html>
